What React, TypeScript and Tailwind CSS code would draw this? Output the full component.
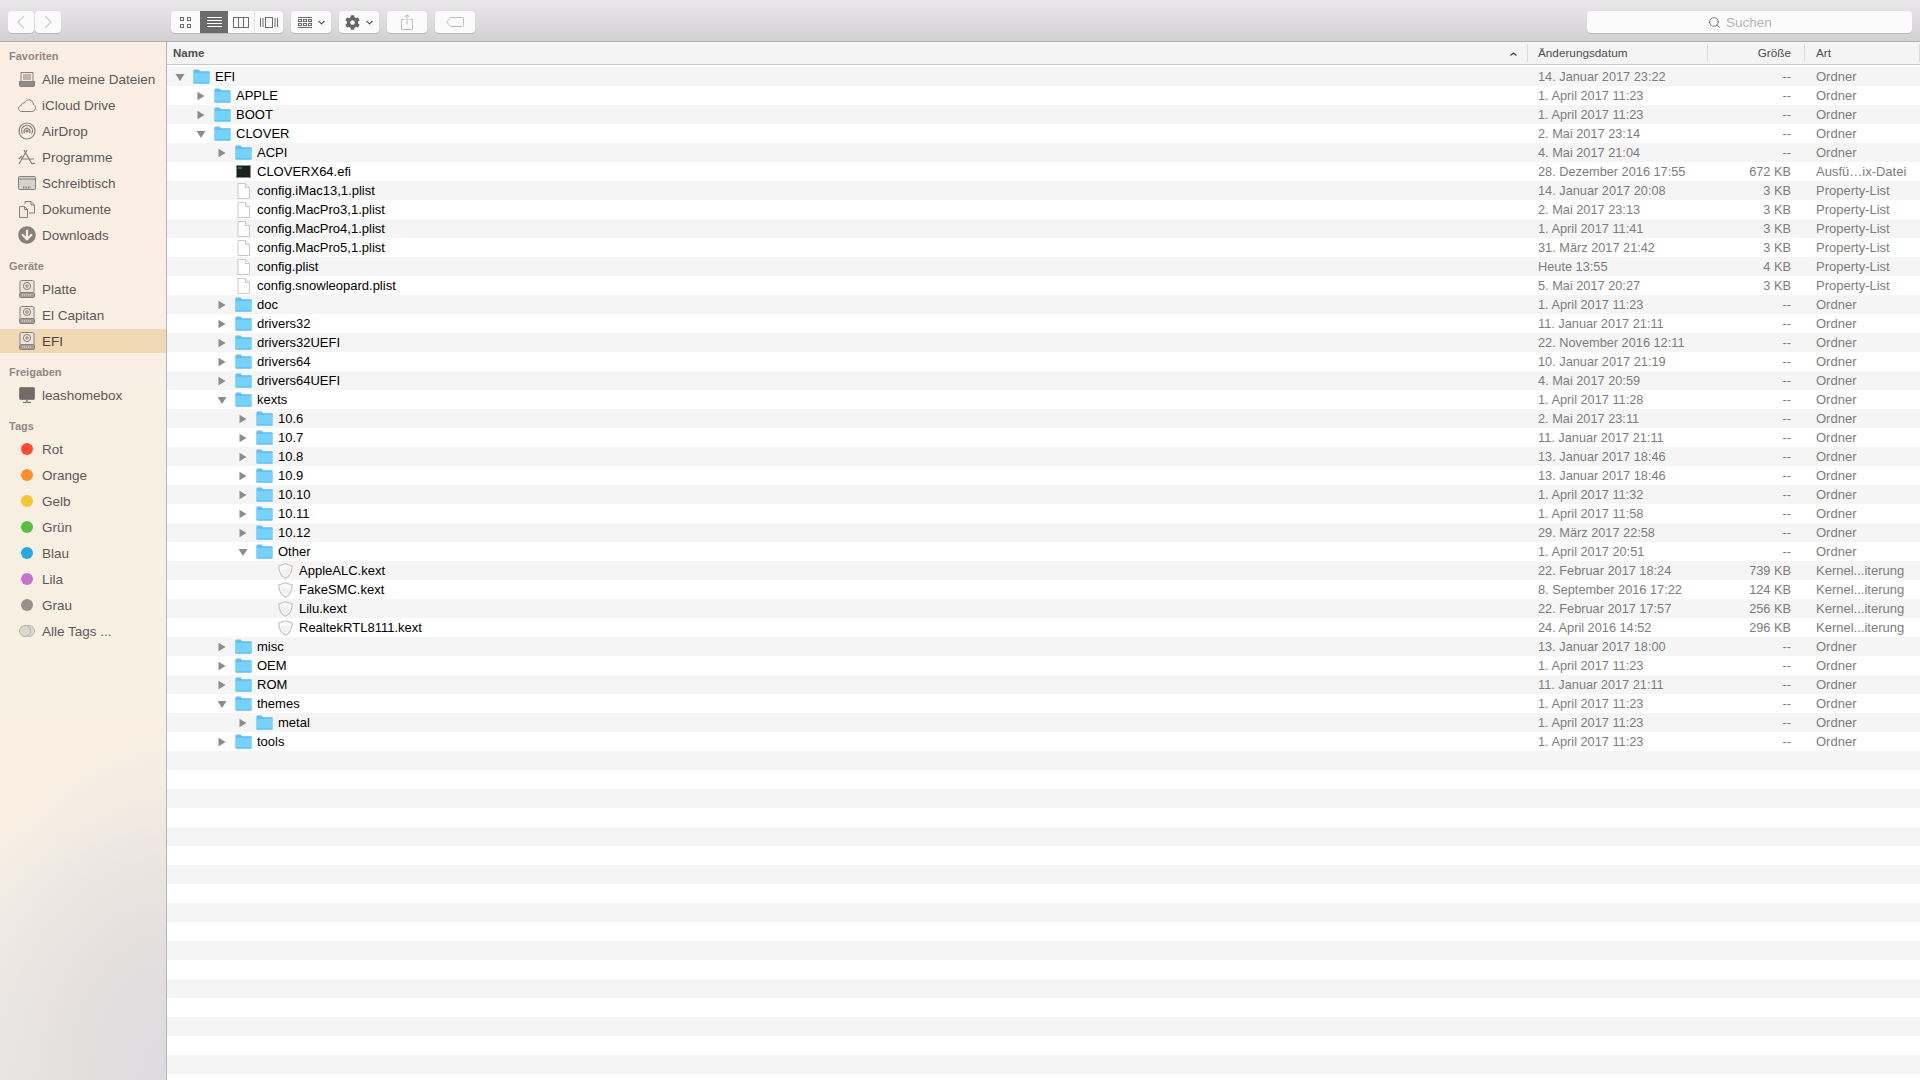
import { FaArrowCircleDown, FaCog } from 'react-icons/fa';
import { Search } from 'lucide-react';

type Row = {
    name: string;
    level: number;
    kind: 'folder' | 'exec' | 'file' | 'kext';
    open?: boolean;
    date: string;
    size: string;
    art: string;
};

const folder = (name: string, level: number, date: string, open = false): Row => ({ name, level, kind: 'folder', open, date, size: '--', art: 'Ordner' });
const plist = (name: string, date: string, size: string): Row => ({ name, level: 2, kind: 'file', date, size, art: 'Property-List' });
const kext = (name: string, date: string, size: string): Row => ({ name, level: 4, kind: 'kext', date, size, art: 'Kernel...iterung' });

const rows: Row[] = [
    folder('EFI', 0, '14. Januar 2017 23:22', true),
    folder('APPLE', 1, '1. April 2017 11:23'),
    folder('BOOT', 1, '1. April 2017 11:23'),
    folder('CLOVER', 1, '2. Mai 2017 23:14', true),
    folder('ACPI', 2, '4. Mai 2017 21:04'),
    { name: 'CLOVERX64.efi', level: 2, kind: 'exec', date: '28. Dezember 2016 17:55', size: '672 KB', art: 'Ausfü…ix-Datei' },
    plist('config.iMac13,1.plist', '14. Januar 2017 20:08', '3 KB'),
    plist('config.MacPro3,1.plist', '2. Mai 2017 23:13', '3 KB'),
    plist('config.MacPro4,1.plist', '1. April 2017 11:41', '3 KB'),
    plist('config.MacPro5,1.plist', '31. März 2017 21:42', '3 KB'),
    plist('config.plist', 'Heute 13:55', '4 KB'),
    plist('config.snowleopard.plist', '5. Mai 2017 20:27', '3 KB'),
    folder('doc', 2, '1. April 2017 11:23'),
    folder('drivers32', 2, '11. Januar 2017 21:11'),
    folder('drivers32UEFI', 2, '22. November 2016 12:11'),
    folder('drivers64', 2, '10. Januar 2017 21:19'),
    folder('drivers64UEFI', 2, '4. Mai 2017 20:59'),
    folder('kexts', 2, '1. April 2017 11:28', true),
    folder('10.6', 3, '2. Mai 2017 23:11'),
    folder('10.7', 3, '11. Januar 2017 21:11'),
    folder('10.8', 3, '13. Januar 2017 18:46'),
    folder('10.9', 3, '13. Januar 2017 18:46'),
    folder('10.10', 3, '1. April 2017 11:32'),
    folder('10.11', 3, '1. April 2017 11:58'),
    folder('10.12', 3, '29. März 2017 22:58'),
    folder('Other', 3, '1. April 2017 20:51', true),
    kext('AppleALC.kext', '22. Februar 2017 18:24', '739 KB'),
    kext('FakeSMC.kext', '8. September 2016 17:22', '124 KB'),
    kext('Lilu.kext', '22. Februar 2017 17:57', '256 KB'),
    kext('RealtekRTL8111.kext', '24. April 2016 14:52', '296 KB'),
    folder('misc', 2, '13. Januar 2017 18:00'),
    folder('OEM', 2, '1. April 2017 11:23'),
    folder('ROM', 2, '11. Januar 2017 21:11'),
    folder('themes', 2, '1. April 2017 11:23', true),
    folder('metal', 3, '1. April 2017 11:23'),
    folder('tools', 2, '1. April 2017 11:23'),
];

const emptyRows = Array.from({ length: 18 }, (_, i) => i);

// small level indents, spelled out so Tailwind picks them up
const indent = ['pl-[8px]', 'pl-[29px]', 'pl-[50px]', 'pl-[71px]', 'pl-[92px]'];

function FolderIcon() {
    return (
        <svg width="17" height="15" viewBox="0 0 17 15" className="shrink-0">
            <path d="M.5 14V1.2C.5.8.8.5 1.2.5h4.2c.4 0 .6.2.8.5l.9 1.4h9c.3 0 .4.2.4.5V14c0 .3-.2.5-.5.5H1c-.3 0-.5-.2-.5-.5z" fill="#62c3f6" />
            <path d="M.5 3.4h16V14c0 .3-.2.5-.5.5H1c-.3 0-.5-.2-.5-.5z" fill="#76d1fb" />
            <path d="M.5 13.7h16v.5H.5z" fill="#46abe4" />
            <path d="M.5 3h16" stroke="#56b8ef" strokeWidth="1" />
        </svg>
    );
}

function FileIcon() {
    return (
        <svg width="13" height="16" viewBox="0 0 13 16" className="shrink-0">
            <path d="M1 .5h7.5L12.5 4.5V15.5H1z" fill="#fff" stroke="#c9c9c9" />
            <path d="M8.5.5V4.5H12.5" fill="#f4f4f4" stroke="#c9c9c9" />
        </svg>
    );
}

function ExecIcon() {
    return (
        <svg width="15" height="13" viewBox="0 0 15 13" className="shrink-0">
            <rect x="0.5" y="0.5" width="14" height="12" fill="#1d1f20" stroke="#8d8d8d" />
            <rect x="2" y="2.5" width="4" height="1" fill="#4fc34f" />
        </svg>
    );
}

function KextIcon() {
    return (
        <svg width="15" height="16" viewBox="0 0 15 16" className="shrink-0">
            <path d="M7.5.8 14.2 3c0 5.5-1.6 9.6-6.7 12.3C2.4 12.6.8 8.5.8 3z" fill="#fafafa" stroke="#c4c4c4" strokeWidth="1.2" />
            <path d="M2.8 5.6c2.8 1.2 6.6 1.2 9.4 0-.4 3.2-1.8 5.7-4.7 7.4-2.9-1.7-4.3-4.2-4.7-7.4z" fill="#f0f0f0" />
        </svg>
    );
}

function Triangle({ open }: { open?: boolean }) {
    return (
        <span className="flex h-[10px] w-[10px] shrink-0 items-center justify-center">
            <svg width="10" height="10" viewBox="0 0 10 10">
                {open ? <path d="M.5 2h9L5 9z" fill="#8c8c8c" /> : <path d="M1.5.8 8.5 5 1.5 9.2z" fill="#8c8c8c" />}
            </svg>
        </span>
    );
}

function TreeRow({ row, index }: { row: Row; index: number }) {
    return (
        <div className={`flex h-[19px] items-center ${index % 2 === 0 ? 'bg-[#f5f5f5]' : 'bg-white'}`}>
            <div className={`flex w-[1360px] items-center text-[13px] text-black ${indent[row.level]}`}>
                {row.kind === 'folder' ? <Triangle open={row.open} /> : <span className="w-[10px] shrink-0" />}
                <span className="ml-[8px] flex w-[17px] shrink-0 justify-center">
                    {row.kind === 'folder' && <FolderIcon />}
                    {row.kind === 'file' && <FileIcon />}
                    {row.kind === 'exec' && <ExecIcon />}
                    {row.kind === 'kext' && <KextIcon />}
                </span>
                <span className="ml-[5px]">{row.name}</span>
            </div>
            <div className="w-[180px] pl-[11px] text-[12.75px] text-[#7d7d7d]">{row.date}</div>
            <div className="w-[97px] pr-[13px] text-right text-[12.75px] text-[#7d7d7d]">{row.size}</div>
            <div className="flex-1 pl-[12px] text-[13px] text-[#7d7d7d]">{row.art}</div>
        </div>
    );
}

function ToolButton({ className, children }: { className: string; children: React.ReactNode }) {
    return <div className={`flex h-[22px] items-center justify-center rounded-[4px] bg-[#fbfbfb] shadow-[0_1px_0_#b9b9b9] ${className}`}>{children}</div>;
}

function Toolbar() {
    const stroke = '#6d6d6d';
    return (
        <div className="flex h-[42px] shrink-0 items-center border-b border-[#b0b0b0] bg-gradient-to-b from-[#e9e7e9] to-[#d2d0d2] pl-[8px] pr-[8px] pt-[3px]">
            <ToolButton className="w-[26px]">
                <svg width="10" height="14" viewBox="0 0 10 14"><path d="M8 1 2 7l6 6" fill="none" stroke="#cfcfcf" strokeWidth="1.3" /></svg>
            </ToolButton>
            <ToolButton className="ml-[1px] w-[26px]">
                <svg width="10" height="14" viewBox="0 0 10 14"><path d="m2 1 6 6-6 6" fill="none" stroke="#cfcfcf" strokeWidth="1.3" /></svg>
            </ToolButton>

            <div className="ml-[110px] flex h-[22px] w-[112px] overflow-hidden rounded-[4px] bg-[#fbfbfb] shadow-[0_1px_0_#b9b9b9]">
                <div className="flex w-[29px] items-center justify-center">
                    <svg width="11" height="11" viewBox="0 0 11 11" fill="none" stroke={stroke}>
                        <rect x="0.5" y="0.5" width="3" height="3" />
                        <rect x="7.5" y="0.5" width="3" height="3" />
                        <rect x="0.5" y="7.5" width="3" height="3" />
                        <rect x="7.5" y="7.5" width="3" height="3" />
                    </svg>
                </div>
                <div className="flex w-[28px] items-center justify-center bg-[#6b6b6b]">
                    <svg width="15" height="11" viewBox="0 0 15 11" fill="#fff">
                        <rect y="0" width="15" height="1" />
                        <rect y="3" width="15" height="1" />
                        <rect y="6" width="15" height="1" />
                        <rect y="9" width="15" height="1" />
                    </svg>
                </div>
                <div className="flex w-[27px] items-center justify-center border-r border-[#e2e2e2]">
                    <svg width="16" height="11" viewBox="0 0 16 11" fill="none" stroke={stroke}>
                        <rect x="0.5" y="0.5" width="15" height="10" />
                        <path d="M5.5 0v11M10.5 0v11" />
                    </svg>
                </div>
                <div className="flex flex-1 items-center justify-center">
                    <svg width="18" height="11" viewBox="0 0 18 11" fill="none" stroke={stroke}>
                        <rect x="5.5" y="0.5" width="7" height="10" />
                        <path d="M.5 1v9M3 1v9M15 1v9M17.5 1v9" />
                    </svg>
                </div>
            </div>

            <ToolButton className="ml-[8px] w-[40px] gap-[6px]">
                <svg width="14" height="11" viewBox="0 0 14 11" fill="none" stroke={stroke}>
                    <path d="M0 .5h14M0 10.5h14" />
                    <rect x="0.5" y="2.5" width="3" height="2" />
                    <rect x="5.5" y="2.5" width="3" height="2" />
                    <rect x="10.5" y="2.5" width="3" height="2" />
                    <rect x="0.5" y="6.5" width="3" height="2" />
                    <rect x="5.5" y="6.5" width="3" height="2" />
                    <rect x="10.5" y="6.5" width="3" height="2" />
                </svg>
                <svg width="7" height="5" viewBox="0 0 7 5"><path d="m.5.8 3 3 3-3" fill="none" stroke="#555" strokeWidth="1.2" /></svg>
            </ToolButton>
            <ToolButton className="ml-[8px] w-[40px] gap-[6px]">
                <FaCog className="text-[15px] text-[#666]" />
                <svg width="7" height="5" viewBox="0 0 7 5"><path d="m.5.8 3 3 3-3" fill="none" stroke="#555" strokeWidth="1.2" /></svg>
            </ToolButton>
            <ToolButton className="ml-[8px] w-[40px]">
                <svg width="12" height="16" viewBox="0 0 12 16" fill="none" stroke="#bdbdbd">
                    <path d="M3.5 5.5h-3v10h11v-10h-3M6 10.5V1M3.5 3 6 .8 8.5 3" />
                </svg>
            </ToolButton>
            <ToolButton className="ml-[8px] w-[40px]">
                <svg width="18" height="10" viewBox="0 0 18 10" fill="none" stroke="#bdbdbd">
                    <path d="M4.5.5h12c.6 0 1 .4 1 1v7c0 .6-.4 1-1 1h-12L.7 5z" />
                </svg>
            </ToolButton>

            <div className="ml-auto flex h-[22px] w-[325px] items-center justify-center gap-[5px] rounded-[4px] bg-[#fbfbfb] pr-[19px] text-[13.5px] text-[#b5b5b5] shadow-[0_1px_0_#b9b9b9]">
                <Search size={13} color="#6a6a6a" strokeWidth={1.6} />
                <span className="pt-[2px]">Suchen</span>
            </div>
        </div>
    );
}

function SidebarItem({ label, icon, active }: { label: string; icon: React.ReactNode; active?: boolean }) {
    return (
        <div className="h-[26px] py-[1px]">
            <div className={`flex h-[24px] items-center pl-[18px] text-[13.5px] ${active ? 'bg-[#f0d8b5] text-[#4c4338]' : 'text-[#5e5955]'}`}>
                <span className="flex w-[18px] justify-center">{icon}</span>
                <span className="ml-[6px] whitespace-nowrap pt-[2px]">{label}</span>
            </div>
        </div>
    );
}

function SidebarLabel({ children, className }: { children: React.ReactNode; className?: string }) {
    return <div className={`mb-[3px] flex h-[14px] items-center pl-[9px] text-[11px] font-bold text-[#8f8983] ${className ?? ''}`}>{children}</div>;
}

const ic = { fill: 'none', stroke: '#85807b', strokeWidth: 1 };

const DiskIcon = () => (
    <svg width="16" height="18" viewBox="0 0 16 18" {...ic}>
        <path d="M1 12V2c0-.8.6-1.500 1.500-1.500h11c.9 0 1.500.7 1.500 1.500v10" fill="#efe5d9" />
        <circle cx="8" cy="6" r="3.600" />
        <circle cx="8" cy="6" r="1.200" />
        <rect x="0.500" y="12.500" width="15" height="5" rx="1" fill="#a39d96" />
        <path d="M3 15h10" stroke="#efe5d9" strokeDasharray="1 1" />
    </svg>
);

const TagDot = ({ color }: { color: string }) => <span className={`h-[12px] w-[12px] rounded-full ${color}`} />;

function Sidebar() {
    return (
        <div className="w-[167px] shrink-0 border-r border-[#b5b5b5] bg-[radial-gradient(ellipse_220px_340px_at_100%_100%,#dcdbdf_0%,#e4dfdf_40%,rgba(247,237,225,0)_100%),linear-gradient(180deg,#faeee5_0%,#f8efe3_40%,#f9efe3_75%,#e9e9e8_100%)] pt-[7px]">
            <SidebarLabel>Favoriten</SidebarLabel>
            <SidebarItem
                label="Alle meine Dateien"
                icon={
                    <svg width="16" height="16" viewBox="0 0 16 16" {...ic}>
                        <path d="M2 11V1.5h12V11" fill="#f3e9de" />
                        <path d="M4 4h8M4 6h8M4 8h8" />
                        <path d="M.5 10.5h15v4c0 .6-.4 1-1 1h-13c-.6 0-1-.4-1-1z" fill="#928c85" />
                    </svg>
                }
            />
            <SidebarItem
                label="iCloud Drive"
                icon={
                    <svg width="18" height="13" viewBox="0 0 18 13" {...ic}>
                        <path d="M4 12.5c-2 0-3.500-1.300-3.500-3 0-1.600 1.200-2.800 2.700-3C3.500 4.500 5 3.500 6.500 4 7.300 2 9 .8 11 .8c2.500 0 4.300 2 4.300 4.500 1.300.5 2.200 1.700 2.200 3.200 0 2.300-1.600 4-3.800 4z" />
                    </svg>
                }
            />
            <SidebarItem
                label="AirDrop"
                icon={
                    <svg width="18" height="18" viewBox="0 0 18 18" {...ic} strokeWidth="1.2">
                        <circle cx="9" cy="9" r="8" />
                        <path d="M4.500 12a5.500 5.500 0 1 1 9 0M6.500 11a3 3 0 1 1 5 0" />
                        <circle cx="9" cy="9" r="1" fill="#85807b" />
                    </svg>
                }
            />
            <SidebarItem
                label="Programme"
                icon={
                    <svg width="18" height="16" viewBox="0 0 18 16" {...ic} strokeWidth="1.2">
                        <path d="M1 15 9 1M6 1l8 14M3 10h13M14 15l3-1M4 7 .8 10" />
                    </svg>
                }
            />
            <SidebarItem
                label="Schreibtisch"
                icon={
                    <svg width="18" height="14" viewBox="0 0 18 14" {...ic}>
                        <rect x="0.500" y="0.500" width="17" height="13" rx="1" fill="#d9d2c9" />
                        <path d="M.5 3h17" />
                        <path d="M5 11.500h8" strokeWidth="2" strokeDasharray="1.500 1" />
                    </svg>
                }
            />
            <SidebarItem
                label="Dokumente"
                icon={
                    <svg width="16" height="17" viewBox="0 0 16 17" {...ic}>
                        <path d="M6 3V.5h6l3.500 3.500v8H10" />
                        <path d="M.5 5.500h5l3 3v8h-8z" fill="#f3e9de" />
                        <path d="M5.500 5.500v3h3M12 .5v3.500h3.500" />
                    </svg>
                }
            />
            <SidebarItem label="Downloads" icon={<FaArrowCircleDown className="text-[18px] text-[#85807b]" />} />

            <SidebarLabel className="mt-[11px]">Geräte</SidebarLabel>
            <SidebarItem label="Platte" icon={<DiskIcon />} />
            <SidebarItem label="El Capitan" icon={<DiskIcon />} />
            <SidebarItem label="EFI" active icon={<DiskIcon />} />

            <SidebarLabel className="mt-[11px]">Freigaben</SidebarLabel>
            <SidebarItem
                label="leashomebox"
                icon={
                    <svg width="16" height="16" viewBox="0 0 16 16" {...ic}>
                        <rect x="0.500" y="0.500" width="15" height="12" rx="1" fill="#716c67" />
                        <path d="M4 15.500h8M8 12.500v3" strokeWidth="1.500" />
                    </svg>
                }
            />

            <SidebarLabel className="mt-[11px]">Tags</SidebarLabel>
            <SidebarItem label="Rot" icon={<TagDot color="bg-[#fb4b37]" />} />
            <SidebarItem label="Orange" icon={<TagDot color="bg-[#f98f2e]" />} />
            <SidebarItem label="Gelb" icon={<TagDot color="bg-[#f4c531]" />} />
            <SidebarItem label="Grün" icon={<TagDot color="bg-[#57c03e]" />} />
            <SidebarItem label="Blau" icon={<TagDot color="bg-[#27a8e2]" />} />
            <SidebarItem label="Lila" icon={<TagDot color="bg-[#c774cf]" />} />
            <SidebarItem label="Grau" icon={<TagDot color="bg-[#95918c]" />} />
            <SidebarItem
                label="Alle Tags ..."
                icon={
                    <svg width="16" height="12" viewBox="0 0 16 12" fill="#dcd7d0" stroke="#b8b3ad">
                        <circle cx="10" cy="6" r="5.500" />
                        <circle cx="6" cy="6" r="5.500" />
                    </svg>
                }
            />
        </div>
    );
}

function ListHeader() {
    return (
        <div className="flex h-[23px] shrink-0 items-center border-b border-[#c8c8c8] bg-[#f4f4f4] text-[11.75px]">
            <div className="relative flex h-full w-[1360px] items-center pl-[6px] pt-[1px] text-[11.5px] font-bold text-[#4d4d4d]">
                Name
                <svg width="7" height="4" viewBox="0 0 7 4" className="absolute right-[10px] top-[10px]">
                    <path d="m.5 3.500 3-2.500 3 2.500" fill="none" stroke="#444" strokeWidth="1.200" />
                </svg>
            </div>
            <div className="flex h-[18px] w-[180px] items-center border-l border-[#dcdcdc] pl-[10px] text-[#4d4d4d]">Änderungsdatum</div>
            <div className="flex h-[18px] w-[97px] items-center justify-end border-l border-[#dcdcdc] pr-[13px] text-[#4d4d4d]">Größe</div>
            <div className="flex h-[18px] flex-1 items-center border-l border-r border-[#dcdcdc] pl-[11px] text-[#4d4d4d]">Art</div>
        </div>
    );
}

export default function App() {
    return (
        <div className="flex h-screen w-screen flex-col overflow-hidden bg-white font-['Liberation_Sans',sans-serif]">
            <Toolbar />
            <div className="flex min-h-0 flex-1">
                <Sidebar />
                <div className="flex min-w-0 flex-1 flex-col">
                    <ListHeader />
                    <div className="min-h-0 flex-1 overflow-hidden pt-[2px]">
                        {rows.map((row, i) => (
                            <TreeRow key={`${row.name}-${i}`} row={row} index={i} />
                        ))}
                        {emptyRows.map((i) => (
                            <div key={i} className={`h-[19px] ${(rows.length + i) % 2 === 0 ? 'bg-[#f5f5f5]' : 'bg-white'}`} />
                        ))}
                    </div>
                </div>
            </div>
        </div>
    );
}
